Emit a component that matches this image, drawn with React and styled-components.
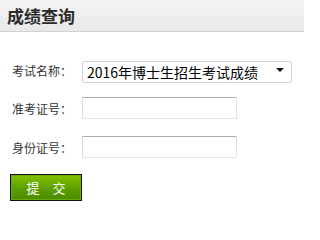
import React from "react";
import styled, { createGlobalStyle } from "styled-components";

const Global = createGlobalStyle`
  html, body { margin: 0; padding: 0; background: #ffffff; }
  body { font-family: "Noto Sans CJK SC", "Liberation Sans", sans-serif; }
`;

const Page = styled.div`
  width: 304px;
  height: 205px;
  overflow: hidden;
  background: #fff;
`;

const Header = styled.div`
  height: 31px;
  border-bottom: 1px solid #d2d2d2;
  background: linear-gradient(#f4f4f4, #e8e8e8);
  display: flex;
  align-items: center;
  padding-left: 7px;
`;

const Title = styled.h1`
  margin: 0;
  font-size: 17px;
  font-weight: 700;
  color: #2b2b2b;
  line-height: 1;
  font-family: "Noto Sans CJK SC", sans-serif;
`;

const Form = styled.form`
  display: flex;
  flex-direction: column;
  gap: 16px;
  padding: 27px 0 0 10px;
`;

const Row = styled.div`
  display: flex;
  align-items: center;
  height: 22px;
  margin-top: ${(p) => (p.$nudge ? "1px" : "0")};
`;

const Label = styled.label`
  width: 72px;
  padding-left: 2px;
  box-sizing: border-box;
  font-size: 12px;
  color: #333;
  white-space: nowrap;
  font-family: "Noto Sans CJK SC", sans-serif;
`;

const SelectWrap = styled.div`
  position: relative;
  width: 210px;
  height: 22px;
`;

const Select = styled.select`
  appearance: none;
  -webkit-appearance: none;
  width: 100%;
  height: 100%;
  box-sizing: border-box;
  border: 1px solid #cfd3d8;
  border-radius: 2px;
  background: #fff;
  padding: 0 0 0 4px;
  font-size: 14px;
  color: #000;
  font-family: "Noto Sans CJK SC", sans-serif;
  outline: none;
`;

const Arrow = styled.span`
  position: absolute;
  right: 8px;
  top: 9px;
  width: 0;
  height: 0;
  border-left: 4px solid transparent;
  border-right: 4px solid transparent;
  border-top: 4px solid #111;
  pointer-events: none;
`;

const Input = styled.input`
  width: 155px;
  height: 22px;
  box-sizing: border-box;
  border: 1px solid #e0e3e9;
  border-top-color: #a9acb2;
  border-left-color: #dadce2;
  background: #fff;
  padding: 0 3px;
  font-size: 12px;
  outline: none;
`;

const Submit = styled.button`
  width: 72px;
  height: 27px;
  box-sizing: border-box;
  border: 1px solid #111;
  background: linear-gradient(#86c300, #5c9e00 55%, #4a8b00);
  color: #fff;
  font-size: 13px;
  font-family: "Noto Sans CJK SC", sans-serif;
  padding: 0;
  cursor: pointer;
  box-shadow: inset 0 0 0 1px #6aab0a;
`;

const ButtonRow = styled.div`
  display: flex;
`;

export default function App() {
  return (
    <Page>
      <Global />
      <Header>
        <Title>成绩查询</Title>
      </Header>
      <Form onSubmit={(e) => e.preventDefault()}>
        <Row>
          <Label>考试名称：</Label>
          <SelectWrap>
            <Select defaultValue="a">
              <option value="a">2016年博士生招生考试成绩</option>
            </Select>
            <Arrow />
          </SelectWrap>
        </Row>
        <Row>
          <Label>准考证号：</Label>
          <Input type="text" />
        </Row>
        <Row $nudge>
          <Label>身份证号：</Label>
          <Input type="text" />
        </Row>
        <ButtonRow>
          <Submit type="submit">提　交</Submit>
        </ButtonRow>
      </Form>
    </Page>
  );
}
